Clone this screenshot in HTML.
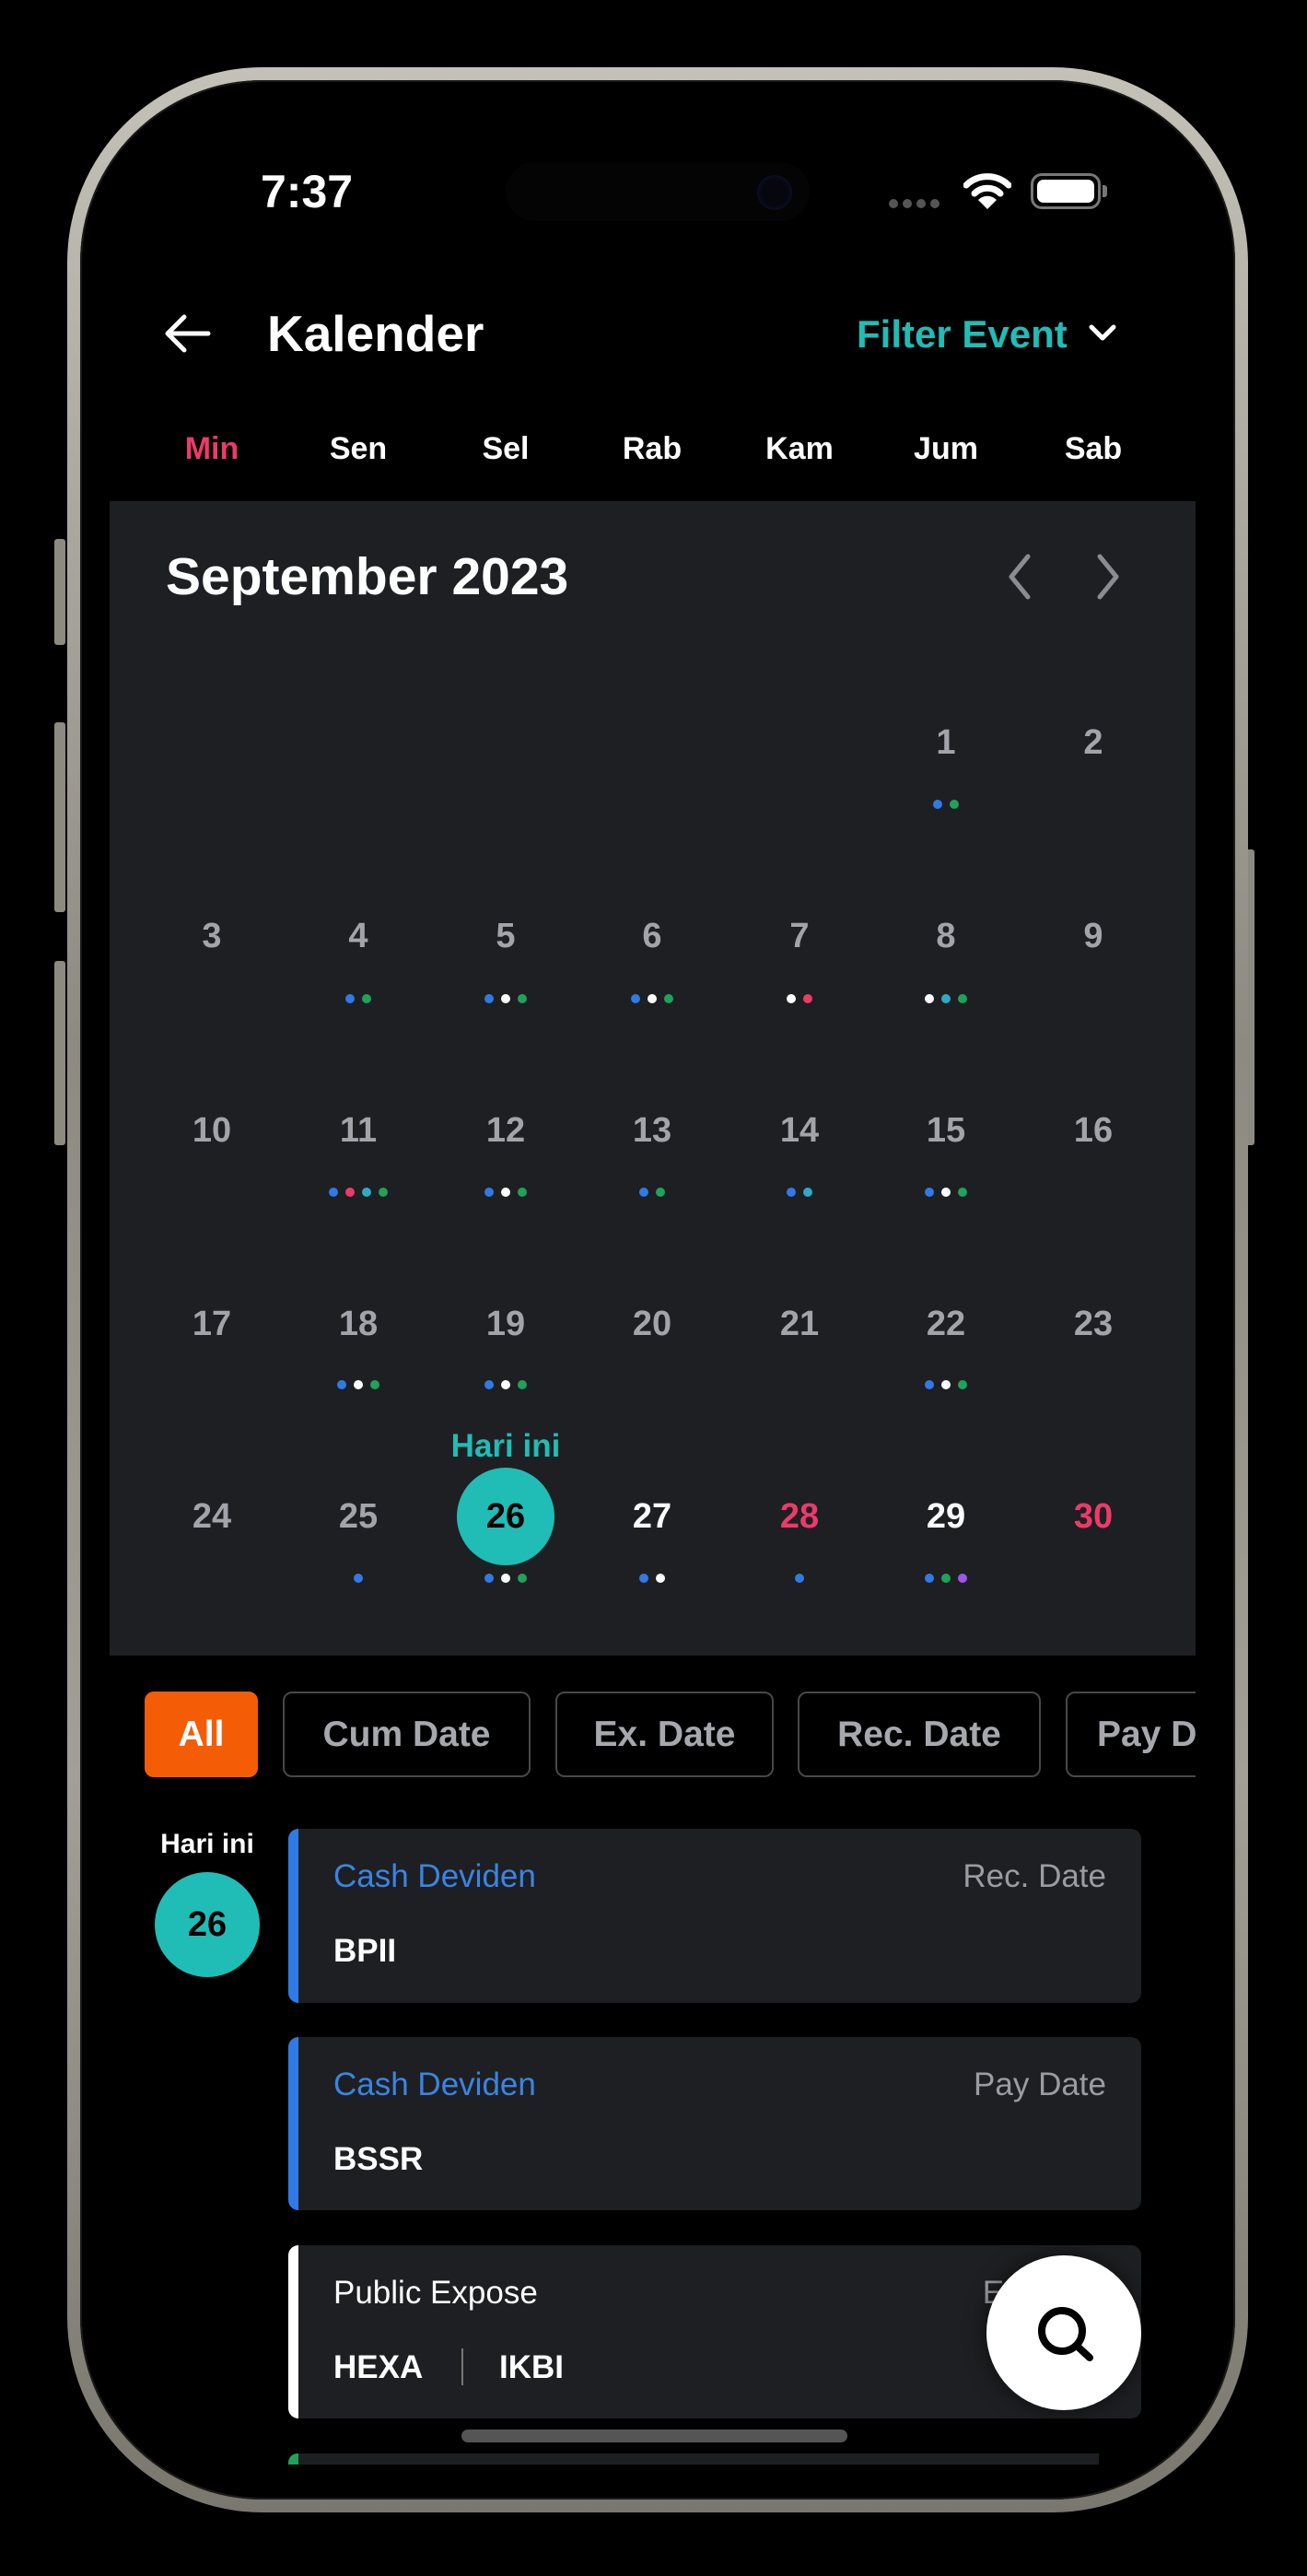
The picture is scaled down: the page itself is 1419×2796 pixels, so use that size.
<!DOCTYPE html>
<html><head><meta charset="utf-8"><style>
*{margin:0;padding:0;box-sizing:border-box}
html,body{width:1419px;height:2796px;background:#000;overflow:hidden;font-family:"Liberation Sans",sans-serif}
.a{position:absolute}
.t{position:absolute;white-space:nowrap}
.frame{left:73px;top:73px;width:1282px;height:2654px;border-radius:212px;background:linear-gradient(180deg,#c4c1b8,#8d8a82 40%,#a29f96 70%,#7a776f);}
.inner{left:87px;top:87px;width:1254px;height:2626px;border-radius:198px;background:#000;overflow:hidden;box-shadow:inset 0 0 0 2px #1a1a18}
.btn{background:#8d8a82;border-radius:3px}
.day{position:absolute;width:140px;text-align:center;font-size:38px;font-weight:bold;color:#a2a4aa;line-height:50px}
.dots{position:absolute;width:140px;height:10px;display:flex;justify-content:center;gap:8px}
.dots i{display:block;width:10px;height:10px;border-radius:50%}
.b{background:#2f7ae5}.w{background:#fff}.g{background:#1fa25a}.p{background:#ec3a6a}.c{background:#2fa9c7}.v{background:#9c57e6}
.wd{position:absolute;width:140px;text-align:center;font-size:34px;font-weight:bold;color:#fff;line-height:40px}
.chip{position:absolute;top:1836px;height:93px;border:2px solid #47484c;border-radius:10px;color:#a6a8ae;font-size:39px;font-weight:bold;line-height:89px;text-align:center;white-space:nowrap;overflow:hidden}
.card{position:absolute;left:313px;width:926px;background:#1e1f22;border-radius:11px;overflow:hidden}
.card .bar{position:absolute;left:0;top:0;bottom:0;width:11px}
.card .ty{position:absolute;left:49px;top:30px;font-size:35px;line-height:44px;color:#3a84e4}
.card .rt{position:absolute;right:38px;top:30px;font-size:35px;line-height:44px;color:#9a9ca2}
.card .nm{position:absolute;left:49px;top:111px;font-size:35px;font-weight:bold;line-height:44px;color:#fff}
</style></head><body>
<div class="a btn" style="left:59px;top:585px;width:12px;height:115px"></div>
<div class="a btn" style="left:59px;top:784px;width:12px;height:206px"></div>
<div class="a btn" style="left:59px;top:1043px;width:12px;height:200px"></div>
<div class="a btn" style="left:1350px;top:922px;width:12px;height:321px"></div>
<div class="a frame"></div>
<div class="a inner"></div>

<!-- status bar -->
<div class="t" style="left:283px;top:180px;font-size:50px;font-weight:bold;color:#fff;line-height:56px">7:37</div>
<div class="a" style="left:549px;top:176px;width:330px;height:64px;border-radius:32px;background:#040404"></div>
<div class="a" style="left:822px;top:190px;width:38px;height:38px;border-radius:50%;background:#06070e;box-shadow:inset 0 0 6px #121840"></div>
<div class="a" style="left:965px;top:216px;display:flex;gap:5px"><i style="display:block;width:10px;height:10px;border-radius:50%;background:#555"></i><i style="display:block;width:10px;height:10px;border-radius:50%;background:#555"></i><i style="display:block;width:10px;height:10px;border-radius:50%;background:#555"></i><i style="display:block;width:10px;height:10px;border-radius:50%;background:#555"></i></div>
<svg class="a" style="left:1046px;top:186px" width="52" height="42" viewBox="0 0 52 42"><path d="M3 15 A33 33 0 0 1 49 15" stroke="#fff" stroke-width="7" fill="none" stroke-linecap="round"/><path d="M12 24 A20 20 0 0 1 40 24" stroke="#fff" stroke-width="7" fill="none" stroke-linecap="round"/><path d="M26 41 L16 31 A14 14 0 0 1 36 31 Z" fill="#fff"/></svg>
<div class="a" style="left:1119px;top:188px;width:76px;height:39px;border:3px solid #777;border-radius:12px;padding:4px"><div style="width:100%;height:100%;background:#fff;border-radius:7px"></div></div>
<div class="a" style="left:1197px;top:201px;width:5px;height:13px;background:#777;border-radius:0 3px 3px 0"></div>

<!-- header -->
<svg class="a" style="left:176px;top:338px" width="54" height="48" viewBox="0 0 54 48"><path d="M50 24 H6 M24 6 L6 24 L24 42" stroke="#fff" stroke-width="5" fill="none" stroke-linecap="round" stroke-linejoin="round"/></svg>
<div class="t" style="left:290px;top:330px;font-size:55px;font-weight:bold;color:#fff;line-height:64px">Kalender</div>
<div class="t" style="left:930px;top:338px;font-size:42px;font-weight:bold;color:#1fbdb6;line-height:50px">Filter Event</div>
<svg class="a" style="left:1181px;top:350px" width="32" height="22" viewBox="0 0 32 22"><path d="M4 5 L16 17 L28 5" stroke="#fff" stroke-width="5" fill="none" stroke-linecap="round" stroke-linejoin="round"/></svg>

<!-- weekdays -->
<div class="wd" style="left:160px;top:467px;color:#ec3a6a">Min</div>
<div class="wd" style="left:319px;top:467px">Sen</div>
<div class="wd" style="left:479px;top:467px">Sel</div>
<div class="wd" style="left:638px;top:467px">Rab</div>
<div class="wd" style="left:798px;top:467px">Kam</div>
<div class="wd" style="left:957px;top:467px">Jum</div>
<div class="wd" style="left:1117px;top:467px">Sab</div>

<!-- calendar panel -->
<div class="a" style="left:119px;top:544px;width:1179px;height:1253px;background:#1e1f22"></div>
<div class="t" style="left:180px;top:593px;font-size:57px;font-weight:bold;color:#fff;line-height:66px">September 2023</div>
<svg class="a" style="left:1090px;top:600px" width="34" height="52" viewBox="0 0 34 52"><path d="M26 4 L8 26 L26 48" stroke="#8a8c92" stroke-width="5" fill="none" stroke-linecap="round" stroke-linejoin="round"/></svg>
<svg class="a" style="left:1186px;top:600px" width="34" height="52" viewBox="0 0 34 52"><path d="M8 4 L26 26 L8 48" stroke="#8a8c92" stroke-width="5" fill="none" stroke-linecap="round" stroke-linejoin="round"/></svg>

<div class="day" style="left:957px;top:781px">1</div><div class="dots" style="left:957px;top:868px"><i class="b"></i><i class="g"></i></div>
<div class="day" style="left:1117px;top:781px">2</div>
<div class="day" style="left:160px;top:991px">3</div>
<div class="day" style="left:319px;top:991px">4</div><div class="dots" style="left:319px;top:1079px"><i class="b"></i><i class="g"></i></div>
<div class="day" style="left:479px;top:991px">5</div><div class="dots" style="left:479px;top:1079px"><i class="b"></i><i class="w"></i><i class="g"></i></div>
<div class="day" style="left:638px;top:991px">6</div><div class="dots" style="left:638px;top:1079px"><i class="b"></i><i class="w"></i><i class="g"></i></div>
<div class="day" style="left:798px;top:991px">7</div><div class="dots" style="left:798px;top:1079px"><i class="w"></i><i class="p"></i></div>
<div class="day" style="left:957px;top:991px">8</div><div class="dots" style="left:957px;top:1079px"><i class="w"></i><i class="c"></i><i class="g"></i></div>
<div class="day" style="left:1117px;top:991px">9</div>
<div class="day" style="left:160px;top:1202px">10</div>
<div class="day" style="left:319px;top:1202px">11</div><div class="dots" style="left:319px;top:1289px"><i class="b"></i><i class="p"></i><i class="c"></i><i class="g"></i></div>
<div class="day" style="left:479px;top:1202px">12</div><div class="dots" style="left:479px;top:1289px"><i class="b"></i><i class="w"></i><i class="g"></i></div>
<div class="day" style="left:638px;top:1202px">13</div><div class="dots" style="left:638px;top:1289px"><i class="b"></i><i class="g"></i></div>
<div class="day" style="left:798px;top:1202px">14</div><div class="dots" style="left:798px;top:1289px"><i class="b"></i><i class="c"></i></div>
<div class="day" style="left:957px;top:1202px">15</div><div class="dots" style="left:957px;top:1289px"><i class="b"></i><i class="w"></i><i class="g"></i></div>
<div class="day" style="left:1117px;top:1202px">16</div>
<div class="day" style="left:160px;top:1412px">17</div>
<div class="day" style="left:319px;top:1412px">18</div><div class="dots" style="left:319px;top:1498px"><i class="b"></i><i class="w"></i><i class="g"></i></div>
<div class="day" style="left:479px;top:1412px">19</div><div class="dots" style="left:479px;top:1498px"><i class="b"></i><i class="w"></i><i class="g"></i></div>
<div class="day" style="left:638px;top:1412px">20</div>
<div class="day" style="left:798px;top:1412px">21</div>
<div class="day" style="left:957px;top:1412px">22</div><div class="dots" style="left:957px;top:1498px"><i class="b"></i><i class="w"></i><i class="g"></i></div>
<div class="day" style="left:1117px;top:1412px">23</div>
<div class="t" style="left:459px;top:1550px;width:180px;text-align:center;font-size:35px;font-weight:bold;color:#1fbdb6;line-height:40px">Hari ini</div>
<div class="a" style="left:496px;top:1593px;width:106px;height:106px;border-radius:50%;background:#1fbdb6"></div>
<div class="day" style="left:160px;top:1621px">24</div>
<div class="day" style="left:319px;top:1621px">25</div><div class="dots" style="left:319px;top:1708px"><i class="b"></i></div>
<div class="day" style="left:479px;top:1621px;color:#000">26</div><div class="dots" style="left:479px;top:1708px"><i class="b"></i><i class="w"></i><i class="g"></i></div>
<div class="day" style="left:638px;top:1621px;color:#fff">27</div><div class="dots" style="left:638px;top:1708px"><i class="b"></i><i class="w"></i></div>
<div class="day" style="left:798px;top:1621px;color:#ec3a6a">28</div><div class="dots" style="left:798px;top:1708px"><i class="b"></i></div>
<div class="day" style="left:957px;top:1621px;color:#fff">29</div><div class="dots" style="left:957px;top:1708px"><i class="b"></i><i class="g"></i><i class="v"></i></div>
<div class="day" style="left:1117px;top:1621px;color:#ec3a6a">30</div>

<!-- chips -->
<div class="a" style="left:119px;top:1830px;width:1179px;height:105px;overflow:hidden">
<div class="chip" style="left:38px;top:6px;width:123px;background:#f45d05;border-color:#f45d05;color:#fff">All</div>
<div class="chip" style="left:188px;top:6px;width:269px">Cum Date</div>
<div class="chip" style="left:484px;top:6px;width:237px">Ex. Date</div>
<div class="chip" style="left:747px;top:6px;width:264px">Rec. Date</div>
<div class="chip" style="left:1038px;top:6px;width:200px;text-align:left;padding-left:32px">Pay Date</div>
</div>

<!-- list -->
<div class="t" style="left:145px;top:1984px;width:160px;text-align:center;font-size:30px;font-weight:bold;color:#fff;line-height:36px">Hari ini</div>
<div class="a" style="left:168px;top:2032px;width:114px;height:114px;border-radius:50%;background:#1fbdb6;color:#000;font-size:38px;font-weight:bold;line-height:114px;text-align:center">26</div>

<div class="card" style="top:1985px;height:189px"><div class="bar b"></div><div class="ty">Cash Deviden</div><div class="rt">Rec. Date</div><div class="nm">BPII</div></div>
<div class="card" style="top:2211px;height:188px"><div class="bar b"></div><div class="ty">Cash Deviden</div><div class="rt">Pay Date</div><div class="nm">BSSR</div></div>
<div class="card" style="top:2437px;height:188px"><div class="bar w"></div><div class="ty" style="color:#fff">Public Expose</div><div class="rt">Ex. Date</div><div class="nm">HEXA</div><div class="a" style="left:188px;top:112px;width:2px;height:40px;background:#777"></div><div class="nm" style="left:229px">IKBI</div></div>
<div class="a" style="left:313px;top:2663px;width:880px;height:12px;background:#1e1f22;border-radius:10px 0 0 0;overflow:hidden"><div style="width:11px;height:100%;background:#1fa25a"></div></div>

<!-- home indicator -->
<div class="a" style="left:501px;top:2637px;width:419px;height:14px;border-radius:7px;background:#555"></div>

<!-- FAB -->
<div class="a" style="left:1071px;top:2448px;width:168px;height:168px;border-radius:50%;background:#fff;box-shadow:0 0 24px rgba(0,0,0,.6)"></div>
<svg class="a" style="left:1115px;top:2492px" width="84" height="84" viewBox="0 0 84 84"><circle cx="38" cy="38" r="22" stroke="#000" stroke-width="8" fill="none"/><path d="M54 54 L68 67" stroke="#000" stroke-width="8" stroke-linecap="round"/></svg>
</body></html>
